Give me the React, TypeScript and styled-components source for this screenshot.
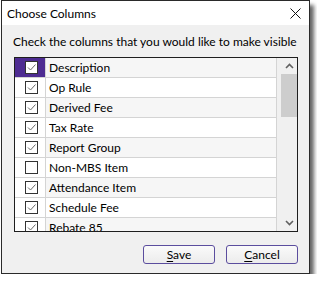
import React from "react";
import styled, { createGlobalStyle } from "styled-components";

const Global = createGlobalStyle`
  html, body { margin: 0; padding: 0; background: #ffffff; }
  body { font-family: Lato, "Noto Sans", sans-serif; }
`;

const Page = styled.div`
  padding: 0 0 0 1px;
`;

const Window = styled.div`
  width: 307px;
  height: 272px;
  border: 1px solid #2a2a2a;
  background: #f0f0f0;
  box-shadow: 4px 5px 4px rgba(0, 0, 0, 0.6);
  display: flex;
  flex-direction: column;
  font-size: 12px;
  color: #000;
`;

const TitleBar = styled.div`
  height: 24px;
  background: #ffffff;
  display: flex;
  align-items: center;
  justify-content: space-between;
  padding: 0 8px 0 5px;
`;

const Title = styled.span`
  font-size: 12px;
`;

const CloseBtn = styled.div`
  width: 12px;
  height: 12px;
  display: flex;
  align-items: center;
  justify-content: center;
`;

const Client = styled.div`
  flex: 1;
  display: flex;
  flex-direction: column;
  padding: 9px 11px 0 12px;
`;

const Prompt = styled.div`
  line-height: 16px;
  height: 16px;
  margin-left: -1px;
  white-space: nowrap;
`;

const ListBox = styled.div`
  margin-top: 7px;
  height: 173px;
  border: 1px solid #1e1e1e;
  display: flex;
  background: #ffffff;
  overflow: hidden;
`;

const Grid = styled.div`
  flex: 1;
  border-right: 1px solid #d4d4d4;
  overflow: hidden;
`;

const Row = styled.div<{ $alt: boolean }>`
  display: flex;
  height: 19px;
  border-bottom: 1px solid #d4d4d4;
  background: ${(p) => (p.$alt ? "#f6f6f6" : "#ffffff")};
  flex-shrink: 0;
`;

const CheckCell = styled.div<{ $selected: boolean }>`
  width: 31px;
  border-right: 1px solid #d4d4d4;
  background: ${(p) => (p.$selected ? "#4e2c92" : "#ffffff")};
  display: flex;
  align-items: center;
  justify-content: center;
  padding-left: 2px;
  box-sizing: border-box;
`;

const Box = styled.div`
  width: 13px;
  height: 13px;
  box-sizing: border-box;
  border: 1px solid #333333;
  background: #ffffff;
  display: flex;
  align-items: center;
  justify-content: center;
`;

const TextCell = styled.div`
  flex: 1;
  padding-left: 3px;
  line-height: 19px;
  white-space: nowrap;
`;

const ScrollBar = styled.div`
  width: 20px;
  background: #f0f0f0;
  display: flex;
  flex-direction: column;
  align-items: flex-end;
`;

const Arrow = styled.div`
  width: 16px;
  height: 16px;
  display: flex;
  align-items: center;
  justify-content: center;
`;

const Thumb = styled.div`
  width: 16px;
  height: 43px;
  background: #cdcdcd;
`;

const Spacer = styled.div`
  flex: 1;
`;

const ButtonRow = styled.div`
  display: flex;
  justify-content: flex-end;
  gap: 11px;
  margin-top: 13px;
`;

const Button = styled.button`
  width: 72px;
  height: 19px;
  box-sizing: border-box;
  border: 1px solid #5b4d9e;
  border-radius: 3px;
  background: linear-gradient(#fafafa, #ececec);
  font-family: Lato, "Noto Sans", sans-serif;
  font-size: 12px;
  color: #000;
  padding: 0;
  line-height: 16px;
  u { text-decoration: underline; text-underline-offset: 2px; }
`;

const Check = () => (
  <svg width="11" height="11" viewBox="0 0 11 11">
    <path d="M2 5.5 L4.5 8 L9.5 2.5" fill="none" stroke="#6a6a6a" strokeWidth="1" />
  </svg>
);

const items: { label: string; checked: boolean }[] = [
  { label: "Description", checked: true },
  { label: "Op Rule", checked: true },
  { label: "Derived Fee", checked: true },
  { label: "Tax Rate", checked: true },
  { label: "Report Group", checked: true },
  { label: "Non-MBS Item", checked: false },
  { label: "Attendance Item", checked: true },
  { label: "Schedule Fee", checked: true },
  { label: "Rebate 85", checked: true },
];

export default function App() {
  return (
    <Page>
      <Global />
      <Window>
        <TitleBar>
          <Title>Choose Columns</Title>
          <CloseBtn>
            <svg width="11" height="11" viewBox="0 0 11 11">
              <path d="M0.5 0.5 L10.5 10.5 M10.5 0.5 L0.5 10.5" stroke="#111" strokeWidth="1" />
            </svg>
          </CloseBtn>
        </TitleBar>
        <Client>
          <Prompt>Check the columns that you would like to make visible</Prompt>
          <ListBox>
            <Grid>
              {items.map((it, i) => (
                <Row key={it.label} $alt={i % 2 === 0}>
                  <CheckCell $selected={i === 0}>
                    <Box>{it.checked && <Check />}</Box>
                  </CheckCell>
                  <TextCell>{it.label}</TextCell>
                </Row>
              ))}
            </Grid>
            <ScrollBar>
              <Arrow>
                <svg width="9" height="6" viewBox="0 0 9 6">
                  <path d="M1 5 L4.5 1.5 L8 5" fill="none" stroke="#606060" strokeWidth="1.6" />
                </svg>
              </Arrow>
              <Thumb />
              <Spacer />
              <Arrow>
                <svg width="9" height="6" viewBox="0 0 9 6">
                  <path d="M1 1 L4.5 4.5 L8 1" fill="none" stroke="#606060" strokeWidth="1.6" />
                </svg>
              </Arrow>
            </ScrollBar>
          </ListBox>
          <ButtonRow>
            <Button>
              <u>S</u>ave
            </Button>
            <Button>
              <u>C</u>ancel
            </Button>
          </ButtonRow>
        </Client>
      </Window>
    </Page>
  );
}
